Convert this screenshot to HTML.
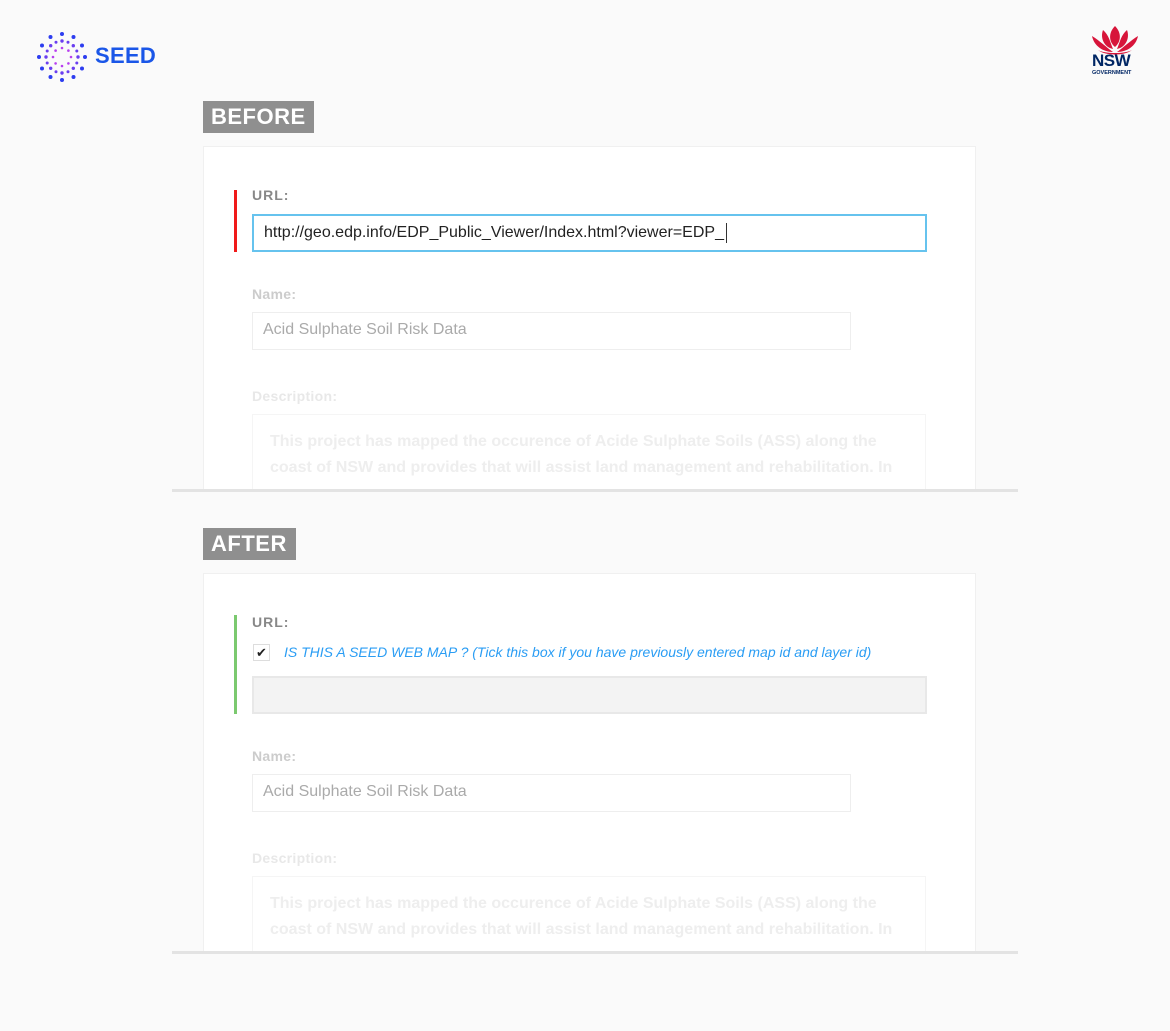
<!DOCTYPE html>
<html><head><meta charset="utf-8"><style>
*{box-sizing:border-box;margin:0;padding:0}
body{width:1170px;height:1031px;background:#fafafa;font-family:"Liberation Sans",Arial,sans-serif;position:relative;overflow:hidden}
.abs{position:absolute}
.badge{background:#8f8f8f;color:#fff;font-weight:bold;font-size:22px;line-height:32px;padding:0 8px;letter-spacing:0.5px}
.card{background:#fff;border:1px solid #f0f0f0;left:203px;width:773px;overflow:hidden}
.line{left:172px;width:846px;height:3px;background:#e3e3e3}
.lbl{font-size:14px;font-weight:bold;letter-spacing:1px}
.inp{height:38px;font-size:16px;line-height:34px;padding-left:10px}
.desc{color:#eee;font-size:16px;font-weight:bold;line-height:26px}
</style></head><body>
<svg class="abs" style="left:36px;top:31px" width="52" height="52" viewBox="-26 -26 52 52">
<g fill="#2d3df0">
<circle cx="0" cy="-23" r="2"/><circle cx="0" cy="23" r="2"/><circle cx="-23" cy="0" r="2"/><circle cx="23" cy="0" r="2"/>
<circle cx="11.5" cy="-20" r="2"/><circle cx="-11.5" cy="-20" r="2"/><circle cx="11.5" cy="20" r="2"/><circle cx="-11.5" cy="20" r="2"/>
<circle cx="20" cy="-11.5" r="2"/><circle cx="-20" cy="-11.5" r="2"/><circle cx="20" cy="11.5" r="2"/><circle cx="-20" cy="11.5" r="2"/></g>
<g fill="#6a3ef0">
<circle cx="0" cy="-16" r="1.7"/><circle cx="0" cy="16" r="1.7"/><circle cx="-16" cy="0" r="1.7"/><circle cx="16" cy="0" r="1.7"/>
<circle cx="11.3" cy="-11.3" r="1.7"/><circle cx="-11.3" cy="-11.3" r="1.7"/><circle cx="11.3" cy="11.3" r="1.7"/><circle cx="-11.3" cy="11.3" r="1.7"/>
<circle cx="6" cy="-14.8" r="1.5"/><circle cx="-6" cy="-14.8" r="1.5"/><circle cx="6" cy="14.8" r="1.5"/><circle cx="-6" cy="14.8" r="1.5"/>
<circle cx="14.8" cy="-6" r="1.5"/><circle cx="-14.8" cy="-6" r="1.5"/><circle cx="14.8" cy="6" r="1.5"/><circle cx="-14.8" cy="6" r="1.5"/></g>
<g fill="#b83ff0">
<circle cx="0" cy="-9" r="1.3"/><circle cx="0" cy="9" r="1.3"/><circle cx="-9" cy="0" r="1.3"/><circle cx="9" cy="0" r="1.3"/>
<circle cx="6.4" cy="-6.4" r="1.3"/><circle cx="-6.4" cy="-6.4" r="1.3"/><circle cx="6.4" cy="6.4" r="1.3"/><circle cx="-6.4" cy="6.4" r="1.3"/></g>
</svg>
<div class="abs" style="left:95px;top:43px;font-size:22px;font-weight:bold;color:#1a56e8;letter-spacing:0.3px">SEED</div>
<svg class="abs" style="left:1090px;top:26px" width="50" height="30" viewBox="0 0 50 30">
<path d="M25 0 C18 7 19 16 25 21 C31 16 32 7 25 0Z M13 4 C10 12 14 21 23 23 C20 16 19 9 13 4Z M37 4 C40 12 36 21 27 23 C30 16 31 9 37 4Z M2 10 C4 20 13 26 23 26 C16 21 10 15 2 10Z M48 10 C46 20 37 26 27 26 C34 21 40 15 48 10Z M8 24 C15 30 35 30 42 24 C35 28 15 28 8 24Z" fill="#d7153a"/>
</svg>
<div class="abs" style="left:1092px;top:51px;font-size:17px;font-weight:bold;color:#002664;letter-spacing:-0.5px">NSW</div>
<div class="abs" style="left:1092px;top:70px;font-size:5.5px;font-weight:bold;color:#002664">GOVERNMENT</div>

<div class="abs badge" style="left:203px;top:101px;height:32px;width:111px">BEFORE</div>
<div class="abs card" style="top:146px;height:344px">
<div class="abs" style="left:30px;top:43px;width:3px;height:62px;background:#f01a1a"></div>
<div class="abs lbl" style="left:48px;top:40px;color:#888">URL:</div>
<div class="abs inp" style="left:48px;top:67px;width:675px;border:2px solid #66c3ee;color:#222">http://geo.edp.info/EDP_Public_Viewer/Index.html?viewer=EDP_<span style="display:inline-block;width:1px;height:20px;background:#333;vertical-align:middle;margin-left:2px"></span></div>
<div class="abs lbl" style="left:48px;top:139px;color:#ccc;letter-spacing:0.3px">Name:</div>
<div class="abs inp" style="left:48px;top:165px;width:599px;border:1px solid #eee;color:#aaa">Acid Sulphate Soil Risk Data</div>
<div class="abs lbl" style="left:48px;top:241px;color:#e8e8e8;letter-spacing:0.3px">Description:</div>
<div class="abs" style="left:48px;top:267px;width:674px;height:100px;border:1px solid #f5f5f5;padding:14px 17px">
<div class="desc">This project has mapped the occurence of Acide Sulphate Soils (ASS) along the<br>coast of NSW and provides that will assist land management and rehabilitation. In</div></div>
</div>
<div class="abs line" style="top:489px"></div>

<div class="abs badge" style="left:203px;top:528px;height:32px;width:93px">AFTER</div>
<div class="abs card" style="top:573px;height:379px">
<div class="abs" style="left:30px;top:41px;width:3px;height:99px;background:#7bc96f"></div>
<div class="abs lbl" style="left:48px;top:40px;color:#888">URL:</div>
<div class="abs" style="left:49px;top:70px;width:17px;height:17px;border:1px solid #ddd;font-size:13px;line-height:15px;text-align:center;color:#222">✔</div>
<div class="abs" style="left:80px;top:70px;font-size:14px;font-style:italic;color:#2a9df4">IS THIS A SEED WEB MAP ? (Tick this box if you have previously entered map id and layer id)</div>
<div class="abs" style="left:48px;top:102px;width:675px;height:38px;background:#f3f3f3;border:2px solid #e8e8e8"></div>
<div class="abs lbl" style="left:48px;top:174px;color:#ccc;letter-spacing:0.3px">Name:</div>
<div class="abs inp" style="left:48px;top:200px;width:599px;border:1px solid #eee;color:#aaa">Acid Sulphate Soil Risk Data</div>
<div class="abs lbl" style="left:48px;top:276px;color:#e8e8e8;letter-spacing:0.3px">Description:</div>
<div class="abs" style="left:48px;top:302px;width:674px;height:100px;border:1px solid #f5f5f5;padding:14px 17px">
<div class="desc">This project has mapped the occurence of Acide Sulphate Soils (ASS) along the<br>coast of NSW and provides that will assist land management and rehabilitation. In</div></div>
</div>
<div class="abs line" style="top:951px"></div>
</body></html>
